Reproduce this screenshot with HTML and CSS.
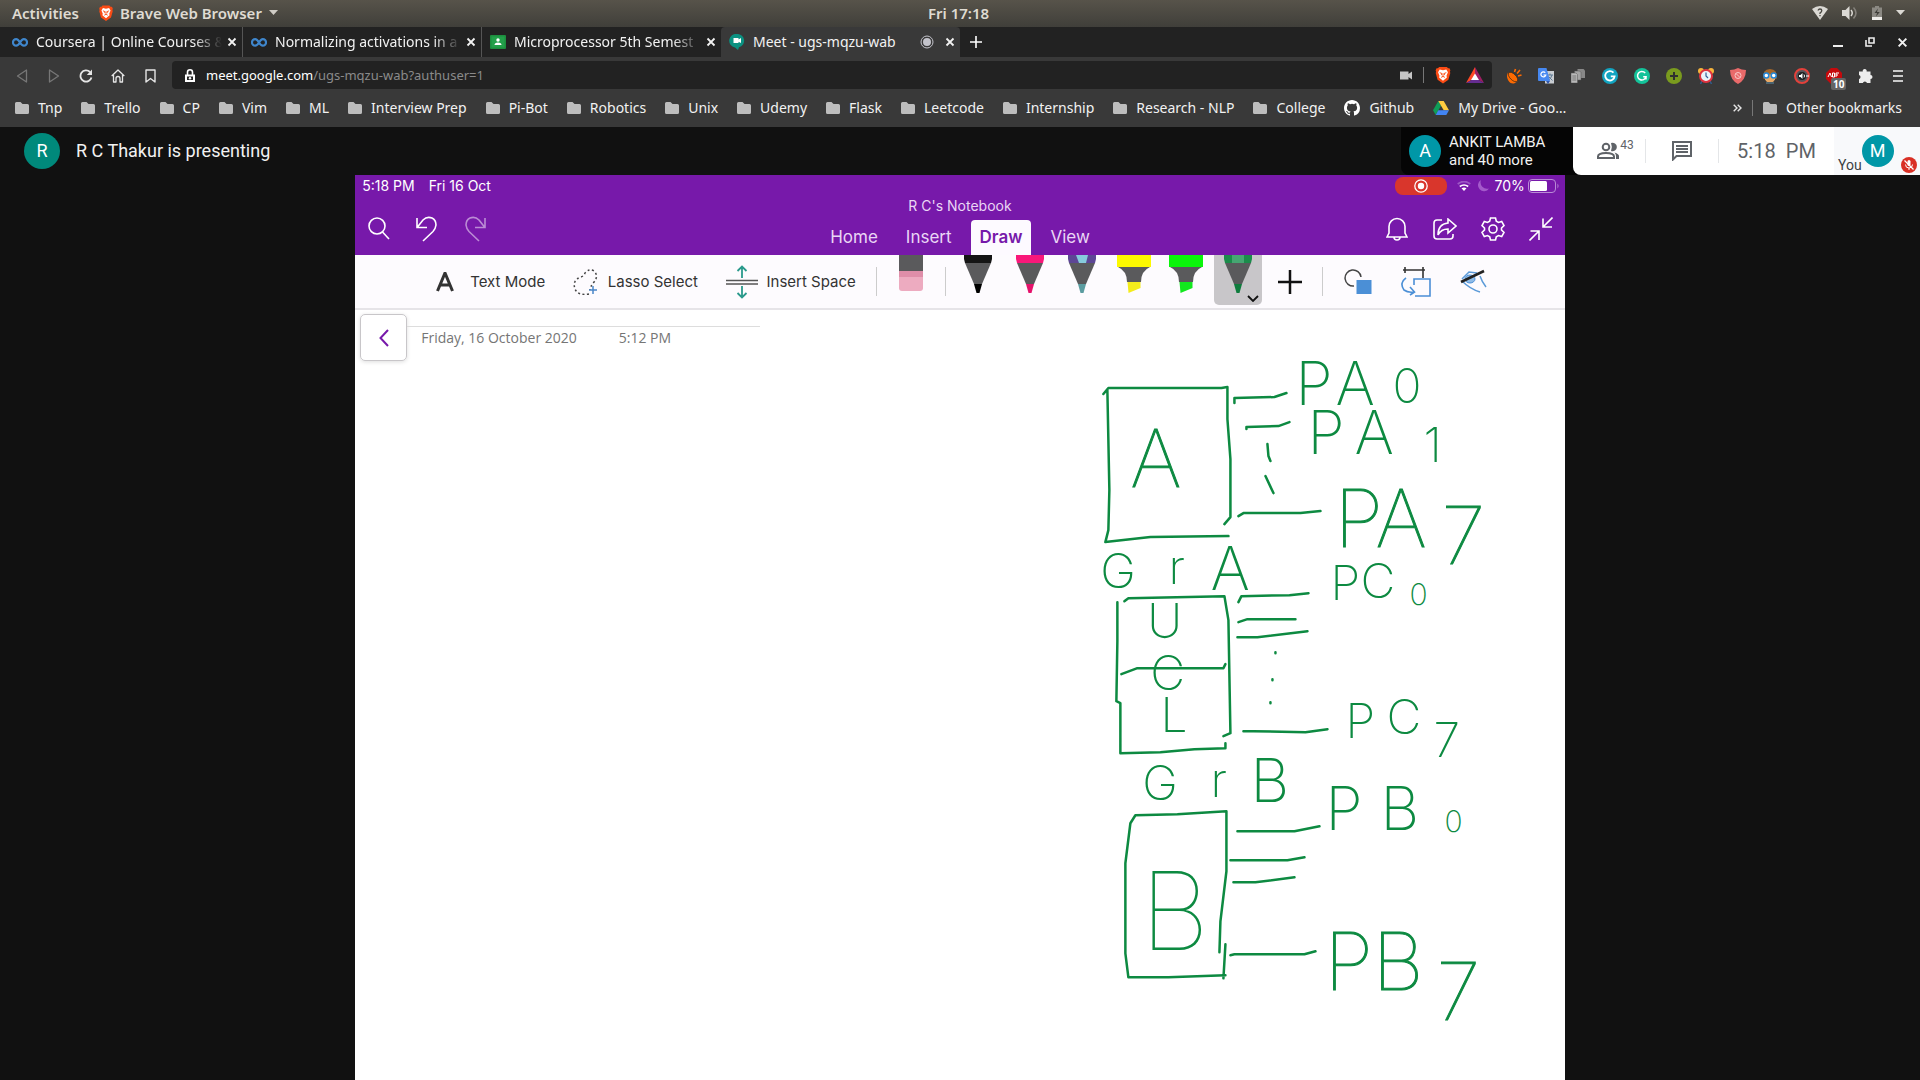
FILE: index.html
```html
<!DOCTYPE html>
<html lang="en">
<head>
<meta charset="utf-8">
<title>Meet - ugs-mqzu-wab</title>
<link rel="stylesheet" href="styles.css">
</head>
<body>
<svg class="defs" aria-hidden="true">
  <symbol id="folder" viewBox="0 0 14 12"><path d="M0 1.500Q0 0 1.500 0H5.500L7.500 2H12.500Q14 2 14 3.500V10.500Q14 12 12.500 12H1.500Q0 12 0 10.500Z" fill="#bdbdbd"/></symbol>
  <symbol id="coursera" viewBox="0 0 16 9"><path d="M8 4.500C6.500 2 5.500 1.200 4.200 1.200a3.200 3.200 0 0 0 0 6.500C6 7.700 6.800 6.500 8 4.500S10 1.200 11.800 1.200a3.200 3.200 0 0 1 0 6.500C10.500 7.700 9.500 7 8 4.500" fill="none" stroke="#3f86cc" stroke-width="2.200"/></symbol>
  <symbol id="x" viewBox="0 0 10 10"><path d="M1.500 1.500l7 7M8.500 1.500l-7 7" stroke="#f2f2f2" stroke-width="1.800" fill="none"/></symbol>
  <symbol id="brave" viewBox="0 0 16 19"><path d="M4 1h8l1.500 1.500 1.300-.2 1 2.200-.5 1.500.4 1.500-2 7L8 18.600 2.300 14.500l-2-7L.7 6 .2 4.500l1-2.200 1.300.2Z" fill="#fb4b14"/><path d="M4.500 3.800 8 4.500l3.500-.7 1.700 2.800-1.500 3.700 .4 1.800L8 15.500l-4.100-3.400.4-1.800L2.800 6.600Z" fill="#fff"/><path d="M4.500 7l2.500 1-.8 1.700M11.500 7L9 8l.8 1.700M8 8v3.500M6 12l2-1 2 1" stroke="#fb4b14" fill="none"/></symbol>
</svg>

<header class="desktop">
  <div class="desktop-left">
    <button>Activities</button>
    <button class="app-menu"><svg width="14" height="18"><use href="#brave"/></svg>Brave Web Browser<svg width="9" height="5" viewBox="0 0 9 5"><path d="M0 0h9L4.500 5Z" fill="#cfccc5"/></svg></button>
  </div>
  <time>Fri 17:18</time>
  <div class="desktop-right">
    <svg width="16" height="14" viewBox="0 0 16 14"><path d="M0 3Q8-3 16 3L8 14Z" fill="#dbd9d4"/><path d="M6.200 4.500Q6.200 3 8 3t1.800 1.500T8 7v1M8 9v1.300" stroke="#4a4842" stroke-width="1.300" fill="none"/></svg>
    <svg width="16" height="14" viewBox="0 0 16 14"><path d="M0 4h3.500L7.500 0v14L3.500 10H0Z" fill="#dbd9d4"/><path d="M9 4q2.500 3 0 6" stroke="#dbd9d4" stroke-width="1.500" fill="none"/><path d="M11.500 1.500q5 5.500 0 11" stroke="#85827c" stroke-width="1.500" fill="none"/></svg>
    <svg width="10" height="14" viewBox="0 0 10 14"><path d="M0 1.500h3V0h4v1.500h3V11H0Z" fill="#8b8983"/><path d="M0 11h10v3H0Z" fill="#efeeeb"/><path d="M6 2.500L2.500 7H5L4 10.500 7.800 6H5Z" fill="#3f3e39"/></svg>
    <svg width="9" height="5" viewBox="0 0 9 5"><path d="M0 0h9L4.500 5Z" fill="#dbd9d4"/></svg>
  </div>
</header>

<nav class="tabs" aria-label="Tabs">
  <div class="tab"><svg width="16" height="9"><use href="#coursera"/></svg><a href="#c" class="fade">Coursera | Online Courses &amp;</a><button aria-label="Close tab"><svg width="10" height="10"><use href="#x"/></svg></button></div>
  <div class="tab"><svg width="16" height="9"><use href="#coursera"/></svg><a href="#n" class="fade">Normalizing activations in a</a><button aria-label="Close tab"><svg width="10" height="10"><use href="#x"/></svg></button></div>
  <div class="tab"><svg width="16" height="14" viewBox="0 0 16 14"><rect width="16" height="14" rx="1" fill="#1d8e3e"/><rect x="1.500" y="1.500" width="13" height="11" fill="#23a04a"/><circle cx="8" cy="5" r="1.700" fill="#fff"/><path d="M4.500 10q0-2.500 3.500-2.500t3.500 2.500Z" fill="#fff"/></svg><a href="#m" class="fade">Microprocessor 5th Semest</a><button aria-label="Close tab"><svg width="10" height="10"><use href="#x"/></svg></button></div>
  <div class="tab active"><svg width="16" height="16" viewBox="0 0 14 16"><path d="M7 0a6.700 6.700 0 0 1 2 13.200L8 16l-3-2.500A6.700 6.700 0 0 1 7 0Z" fill="#0b9181"/><path d="M3.500 4h5v1.500L11 4v5L8.500 7.800V9h-5Z" fill="#fff"/></svg><a href="#meet">Meet - ugs-mqzu-wab</a><svg width="14" height="14" viewBox="0 0 14 14"><circle cx="7" cy="7" r="6" fill="none" stroke="#c3c3cb"/><circle cx="7" cy="7" r="4" fill="#c3c3cb"/></svg><button aria-label="Close tab"><svg width="10" height="10"><use href="#x"/></svg></button></div>
  <button class="slot" aria-label="New tab"><svg width="12" height="12" viewBox="0 0 12 12"><path d="M6 0v12M0 6h12" stroke="#fff" stroke-width="1.600"/></svg></button>
  <div class="window-buttons">
    <button class="slot" aria-label="Minimize"><svg width="10" height="10" viewBox="0 0 10 10"><path d="M0 9h10" stroke="#eee" stroke-width="2"/></svg></button>
    <button class="slot" aria-label="Restore"><svg width="10" height="10" viewBox="0 0 10 10"><path d="M4 1h5v5H4ZM1 3v6h6" stroke="#eee" stroke-width="1.600" fill="none"/></svg></button>
    <button class="slot" aria-label="Close"><svg width="11" height="11"><use href="#x"/></svg></button>
  </div>
</nav>

<div class="toolbar">
  <div class="slots">
    <button class="slot" aria-label="Back"><svg width="12" height="14" viewBox="0 0 12 14"><path d="M10.500 1v12L1.500 7Z" fill="none" stroke="#777" stroke-width="1.300" stroke-linejoin="round"/></svg></button>
    <button class="slot" aria-label="Forward"><svg width="12" height="14" viewBox="0 0 12 14"><path d="M1.500 1v12l9-6Z" fill="none" stroke="#777" stroke-width="1.300" stroke-linejoin="round"/></svg></button>
    <button class="slot" aria-label="Reload"><svg width="14" height="14" viewBox="0 0 14 14"><path d="M11 3a5.600 5.600 0 1 0 1.500 5.500" fill="none" stroke="#e6e6e6" stroke-width="1.800"/><path d="M13 .5V6H7.800Z" fill="#e6e6e6"/></svg></button>
    <button class="slot" aria-label="Home"><svg width="14" height="14" viewBox="0 0 14 14"><path d="M.7 7L7 1l6.300 6M2.500 6v7H5V9.500q0-2 2-2t2 2V13h2.500V6" fill="none" stroke="#e6e6e6" stroke-width="1.300" stroke-linejoin="round"/></svg></button>
    <button class="slot" aria-label="Bookmark"><svg width="11" height="14" viewBox="0 0 11 14"><path d="M1 1h9v12L5.500 9.500 1 13Z" fill="none" stroke="#e6e6e6" stroke-width="1.400" stroke-linejoin="round"/></svg></button>
  </div>
  <div class="address">
    <svg width="10" height="13" viewBox="0 0 10 13"><path d="M2.500 6V3.300a2.500 2.500 0 0 1 5 0V6" fill="none" stroke="#fff" stroke-width="1.600"/><path d="M0 5.500h10V13H0Z" fill="#fff"/><rect x="2" y="7.500" width="6" height="3.500" fill="#222"/><circle cx="5" cy="9.200" r="1.200" fill="#fff"/></svg>
    <a href="#url">meet.google.com<span>/ugs-mqzu-wab?authuser=1</span></a>
    <svg width="12" height="9" viewBox="0 0 12 9"><path d="M0 .5h8.500V3L12 .5v8L8.500 6v2.500H0Z" fill="#c6c6c6"/></svg>
    <i class="rule"></i>
    <button aria-label="Brave Shields"><svg width="16" height="18"><use href="#brave"/></svg></button>
    <button aria-label="Brave Rewards"><svg width="18" height="16" viewBox="0 0 18 16"><path d="M9 0L0 16l9-5Z" fill="#ff4724"/><path d="M9 0l9 16-9-5Z" fill="#9e1f63"/><path d="M0 16h18l-9-5Z" fill="#662d91"/><path d="M9 6.500l4 6.500H5Z" fill="#fff"/></svg></button>
  </div>
  <div class="slots">
    <button class="slot" aria-label="Feed"><svg width="16" height="16" viewBox="0 0 16 16"><path d="M2 4.500Q0 8 2 12t6 3.500l3.500-2Q4 11 2 4.500Z" fill="#fd6a02"/><ellipse cx="7" cy="9" rx="6" ry="3" transform="rotate(45 7 9)" fill="#fd6a02" stroke="#3a2a1a" stroke-width=".7"/><path d="M8.500 4l1-3M11 5.500l3-3.500M12 8l3.500-1" stroke="#fd6a02" stroke-width="1.600"/></svg></button>
    <button class="slot" aria-label="Translate"><svg width="16" height="16" viewBox="0 0 16 16"><rect x="7" y="3" width="9" height="12.500" fill="#c9cdd2"/><path d="M8.500 7H15M12 5.500V7M14 7q-1 4-4 5.500M10.500 8.500l4 4" stroke="#5d7892" fill="none"/><path d="M0 1q0-1 1-1h7.500l3.500 13H1q-1 0-1-1Z" fill="#4688f1"/><path d="M8 13h4l-2 3Z" fill="#3057ac"/><path d="M7.300 4.700A2.500 2.500 0 1 0 7.800 7H5.500" stroke="#fff" stroke-width="1.200" fill="none"/></svg></button>
    <button class="slot" aria-label="Copy"><svg width="14" height="14" viewBox="0 0 14 14"><path d="M6.500 0h6L14 1.500V9H6.500Z" fill="#888"/><path d="M3.500 2h5L10 3.500V11H3.500Z" fill="#a5a5a5" stroke="#555" stroke-width=".5"/><path d="M0 4h5l1.500 1.500V14H0Z" fill="#b8b8b8" stroke="#555" stroke-width=".5"/><path d="M1.300 7h4M1.300 9h4M1.300 11h4" stroke="#777"/></svg></button>
    <button class="slot" aria-label="Grammar"><svg width="16" height="16" viewBox="0 0 16 16"><circle cx="8" cy="8" r="8" fill="#12a4c1"/><path d="M11.500 4.700A4.700 4.700 0 1 0 12.600 8.300H8.800" stroke="#fff" stroke-width="1.800" fill="none"/></svg></button>
    <button class="slot" aria-label="Grammarly"><svg width="16" height="16" viewBox="0 0 16 16"><circle cx="8" cy="8" r="8" fill="#14c39a"/><path d="M11.200 5A4.300 4.300 0 1 0 12 8.800H9.200M12 8.800V11.500" stroke="#fff" stroke-width="1.500" fill="none"/></svg></button>
    <button class="slot" aria-label="Add"><svg width="16" height="16" viewBox="0 0 16 16"><circle cx="8" cy="8" r="8" fill="#7a9b1e"/><path d="M8 4v8M4 8h8" stroke="#303030" stroke-width="2"/></svg></button>
    <button class="slot" aria-label="Alarm"><svg width="16" height="16" viewBox="0 0 16 16"><circle cx="3" cy="3" r="3" fill="#f6b43c"/><circle cx="13" cy="3" r="3" fill="#f6b43c"/><path d="M4 13l-1.500 3M12 13l1.500 3" stroke="#2f5d8c" stroke-width="1.500"/><circle cx="8" cy="8" r="6" fill="#eaf4fb" stroke="#e0333f" stroke-width="2"/><path d="M8 4.500V8l2 2" stroke="#34609b" stroke-width="1.200" fill="none"/></svg></button>
    <button class="slot" aria-label="Shield"><svg width="16" height="16" viewBox="0 0 16 16"><path d="M8 0q3.500 2 8 2-.2 10-8 14Q.2 12 0 2 4.500 2 8 0Z" fill="#e96a6a"/><circle cx="8" cy="7.500" r="3" fill="none" stroke="#f9c9c9"/><path d="M6 5.500l4 4" stroke="#f9c9c9"/></svg></button>
    <button class="slot" aria-label="Profile"><svg width="16" height="16" viewBox="0 0 16 16"><path d="M1.500 11Q0 1 8 1t6.500 10Z" fill="#a4672b"/><path d="M3 6.500h10v5Q8 19 3 11.500Z" fill="#e9aa67"/><circle cx="4.300" cy="7.500" r="2.500" fill="#fff" stroke="#2387d8" stroke-width="1.500"/><circle cx="11.700" cy="7.500" r="2.500" fill="#fff" stroke="#2387d8" stroke-width="1.500"/><path d="M4 14h8v2H4Z" fill="#4b6471"/></svg></button>
    <button class="slot" aria-label="Volume"><svg width="16" height="16" viewBox="0 0 16 16"><circle cx="8" cy="8" r="7" fill="#56565b" stroke="#e3413b" stroke-width="2"/><circle cx="8" cy="8" r="4" fill="#1d1d1f"/><path d="M5 7h1.500L8.500 5v6L6.500 9H5Z" fill="#fff"/><path d="M10 6.500q1 1.500 0 3M12 8h3" stroke="#fff" fill="none"/></svg></button>
    <button class="slot badge-host" aria-label="Ad blocker"><svg width="16" height="16" viewBox="0 0 16 16"><path d="M5 0h6l5 5v6l-5 5H5l-5-5V5Z" fill="#c5090c"/><path d="M2 9l2-4 1.500 4M6.500 9V5h2v4ZM10 9V5h3M10 7h2" stroke="#fff" fill="none"/></svg><b class="badge">10</b></button>
    <button class="slot" aria-label="Extensions"><svg width="15" height="15" viewBox="0 0 15 15"><path d="M0 3.500h3.800a2 2 0 1 1 3.800 0H11.500V7a2 2 0 1 1 0 4v4H8a2.200 2.200 0 0 0-4.200 0H0v-3.800A2.200 2.200 0 0 0 0 7Z" fill="#eee"/></svg></button>
    <button class="slot" aria-label="Menu"><svg width="10" height="12" viewBox="0 0 10 12"><path d="M0 1h10M0 6h10M0 11h10" stroke="#c9c9c9" stroke-width="2"/></svg></button>
  </div>
</div>

<nav class="bookmarks" aria-label="Bookmarks">
  <a href="#b"><svg width="14" height="12"><use href="#folder"/></svg>Tnp</a>
  <a href="#b"><svg width="14" height="12"><use href="#folder"/></svg>Trello</a>
  <a href="#b"><svg width="14" height="12"><use href="#folder"/></svg>CP</a>
  <a href="#b"><svg width="14" height="12"><use href="#folder"/></svg>Vim</a>
  <a href="#b"><svg width="14" height="12"><use href="#folder"/></svg>ML</a>
  <a href="#b"><svg width="14" height="12"><use href="#folder"/></svg>Interview Prep</a>
  <a href="#b"><svg width="14" height="12"><use href="#folder"/></svg>Pi-Bot</a>
  <a href="#b"><svg width="14" height="12"><use href="#folder"/></svg>Robotics</a>
  <a href="#b"><svg width="14" height="12"><use href="#folder"/></svg>Unix</a>
  <a href="#b"><svg width="14" height="12"><use href="#folder"/></svg>Udemy</a>
  <a href="#b"><svg width="14" height="12"><use href="#folder"/></svg>Flask</a>
  <a href="#b"><svg width="14" height="12"><use href="#folder"/></svg>Leetcode</a>
  <a href="#b"><svg width="14" height="12"><use href="#folder"/></svg>Internship</a>
  <a href="#b"><svg width="14" height="12"><use href="#folder"/></svg>Research - NLP</a>
  <a href="#b"><svg width="14" height="12"><use href="#folder"/></svg>College</a>
  <a href="#b"><svg width="16" height="16" viewBox="0 0 16 16"><path fill="#fff" d="M8 0C3.580 0 0 3.580 0 8c0 3.540 2.290 6.530 5.470 7.590.4.070.55-.17.55-.38 0-.19-.01-.82-.01-1.490-2.010.37-2.530-.49-2.690-.94-.09-.23-.48-.94-.82-1.130-.28-.15-.68-.52-.01-.53.63-.01 1.080.58 1.230.82.72 1.210 1.870.87 2.330.66.07-.52.28-.87.51-1.070-1.780-.2-3.640-.89-3.640-3.950 0-.87.31-1.590.82-2.150-.08-.2-.36-1.020.08-2.120 0 0 .67-.21 2.200.82a7.600 7.600 0 0 1 4 0c1.530-1.040 2.200-.82 2.200-.82.44 1.100.16 1.920.08 2.120.51.56.82 1.270.82 2.150 0 3.070-1.870 3.750-3.650 3.950.29.25.54.73.54 1.480 0 1.070-.01 1.930-.01 2.200 0 .21.15.46.55.38A8 8 0 0 0 16 8c0-4.420-3.580-8-8-8Z"/></svg>Github</a>
  <a href="#b"><svg width="16" height="14" viewBox="0 0 16 14"><path d="M5.300 0L0 9.300 2.700 14 8 4.700Z" fill="#0f9d58"/><path d="M5.300 0h5.400L16 9.300h-5.300Z" fill="#ffcd40"/><path d="M5.300 9.300H16L13.300 14H2.700Z" fill="#4285f4"/></svg>My Drive - Goo…</a>
  <div class="bookmarks-end">
    <button aria-label="More bookmarks"><svg width="9" height="8" viewBox="0 0 9 8"><path d="M.7.7L4 4 .7 7.300M4.700.7L8 4 4.700 7.300" fill="none" stroke="#e6e6e6" stroke-width="1.400"/></svg></button>
    <i class="rule"></i>
    <a href="#b"><svg width="14" height="12"><use href="#folder"/></svg>Other bookmarks</a>
  </div>
</nav>

<main class="meet">
  <div class="meet-bar">
    <span class="avatar presenter">R</span>
    <h1>R C Thakur is presenting</h1>
    <div class="speaker"><span class="avatar">A</span><p>ANKIT LAMBA<br>and 40 more</p></div>
    <div class="panel">
      <button class="people" aria-label="People"><svg width="24" height="24" viewBox="0 0 24 24"><g fill="none" stroke="#5f6368" stroke-width="2"><circle cx="10" cy="8" r="3.300"/><path d="M2 19v-1.500Q2 14 10 14t8 3.500V19Z"/></g><path d="M15 4a4.300 4.300 0 1 1 0 8q1.700-4 0-8ZM18.500 13.500Q23 15 23 17v3h-3v-3q0-2-1.500-3.500Z" fill="#5f6368"/></svg><span>43</span></button>
      <button class="chat" aria-label="Chat"><svg width="20" height="20" viewBox="0 0 20 20"><path d="M1 1h18v14H4.500L1 18.500Z" fill="none" stroke="#5f6368" stroke-width="2"/><path d="M4 5h12M4 8h12M4 11h12" stroke="#5f6368" stroke-width="2"/></svg></button>
      <time>5:18&ensp;PM</time>
      <div class="you"><span>You</span><span class="avatar">M</span><svg class="muted" width="16" height="16" viewBox="0 0 16 16"><circle cx="8" cy="8" r="8" fill="#d93025"/><rect x="6.500" y="3" width="3" height="6" rx="1.500" fill="#fff"/><path d="M4.500 7.500q0 3.500 3.500 3.500t3.500-3.500M8 11v2" stroke="#fff" fill="none"/><path d="M3.500 3.500l9 9" stroke="#fff" stroke-width="1.200"/></svg></div>
    </div>
  </div>

  <section class="share">
    <header class="note-head">
      <div class="head-side">
        <div class="status"><span>5:18 PM</span><span>Fri 16 Oct</span></div>
        <div class="head-icons">
          <button aria-label="Search"><svg width="22" height="24" viewBox="0 0 22 24"><circle cx="9" cy="9" r="8" /><path d="M14.500 15l6.500 7"/></svg></button>
          <button aria-label="Undo"><svg width="22" height="26" viewBox="0 0 22 26"><path d="M1 2v9.500h10M1.500 11L7 4q4-4 9-2 4 2 4 7-.5 4-3 6.500L7 25"/></svg></button>
          <button class="off" aria-label="Redo"><svg width="22" height="26" viewBox="0 0 22 26"><path d="M21 2v9.500H11M20.500 11L15 4q-4-4-9-2-4 2-4 7 .5 4 3 6.500L15 25"/></svg></button>
        </div>
      </div>
      <div class="head-main">
        <h2>R C's Notebook</h2>
        <nav class="ribbon-tabs"><a href="#h">Home</a><a href="#i">Insert</a><a href="#d" class="on">Draw</a><a href="#v">View</a></nav>
      </div>
      <div class="head-side right">
        <div class="status">
          <span class="record"><svg width="14" height="14" viewBox="0 0 14 14"><circle cx="7" cy="7" r="6.200" fill="none" stroke="#fff" stroke-width="1.300"/><circle cx="7" cy="7" r="3.200" fill="#fff"/></svg></span>
          <svg width="14" height="10" viewBox="0 0 14 10"><path d="M.7 3Q7-2 13.300 3" stroke="#9c56c4" stroke-width="1.700" fill="none"/><path d="M2.800 5.500q4.200-3 8.400 0" stroke="#fff" stroke-width="1.700" fill="none"/><path d="M4.500 7.200q2.500-1.600 5 0L7 10Z" fill="#fff"/></svg>
          <svg width="12" height="12" viewBox="0 0 12 12"><path d="M4 0A6 6 0 1 0 12 8.500 6.500 6.500 0 0 1 4 0Z" fill="#a45acb"/></svg>
          <div class="battery"><span>70%</span>
          <svg width="32" height="14" viewBox="0 0 32 14"><rect x=".5" y=".5" width="27" height="13" rx="3.500" fill="none" stroke="#b98bd6"/><rect x="2" y="2" width="17" height="10" rx="1.500" fill="#fff"/><path d="M29.500 4.500q2 2.500 0 5Z" fill="#b98bd6"/></svg></div>
        </div>
        <div class="head-icons">
          <button aria-label="Notifications"><svg width="22" height="24" viewBox="0 0 22 24"><path d="M1 20L3 16V9.500a8 8 0 0 1 16 0V16l2 4ZM8 20q0 3 3 3t3-3"/></svg></button>
          <button aria-label="Share"><svg width="24" height="22" viewBox="0 0 24 22"><path d="M9 2H4Q1 2 1 5v13q0 3 3 3h13q3 0 3-3v-2M15 1l8 7-8 7V11Q8 11 5 17 5 6 15 5Z"/></svg></button>
          <button aria-label="Settings"><svg width="24" height="24" viewBox="0 0 24 24"><circle cx="12" cy="12" r="4"/><path d="M9.500 1h5l.8 3.200 2.200 1.200 3.200-1 2.300 4.200L20.500 11v2l2.500 2.400-2.300 4.200-3.200-1-2.200 1.200-.8 3.200h-5l-.8-3.200-2.200-1.200-3.200 1L1 15.400 3.500 13v-2L1 8.600l2.300-4.200 3.200 1 2.200-1.200Z"/></svg></button>
          <button aria-label="Exit full screen"><svg width="24" height="24" viewBox="0 0 24 24"><path d="M23.500.5L14 10M14 1.500V10h9M.5 23.500L10 14M1.500 14H10v9"/></svg></button>
        </div>
      </div>
    </header>

    <div class="ribbon">
      <div class="ribbon-tools">
        <button><svg width="20" height="20" viewBox="0 0 20 20"><path d="M2.500 19L10 1l7.500 18M5 13h10" fill="none" stroke="#333" stroke-width="3"/></svg>Text Mode</button>
        <button><svg width="26" height="26" viewBox="0 0 26 26"><path d="M16 25Q5 27 2 20-1 11 8 8q3-1 4-4 4-5 9-2 5 5 0 11-4 5-4 8" fill="none" stroke="#444" stroke-width="1.500" stroke-dasharray="2 2.500"/><path d="M20 17v8M16 21h8" stroke="#4a86c8" stroke-width="1.500"/></svg>Lasso Select</button>
        <button><svg width="32" height="34" viewBox="0 0 32 34"><path d="M0 15.500h32M0 19h32" stroke="#555" stroke-width="1.500"/><path d="M16 13V2M11.500 6L16 1.500 20.500 6M16 21v11M11.500 28l4.500 4.500 4.500-4.500" stroke="#2a9a8c" stroke-width="1.800" fill="none"/></svg>Insert Space</button>
      </div>
      <i class="rule"></i>
      <button class="pen eraser" aria-label="Eraser"><svg width="24" height="36" viewBox="0 0 24 36"><path d="M0 0h24v16H0Z" fill="#5a5a5c"/><path d="M0 16h24v17q0 3-3 3H3q-3 0-3-3Z" fill="#edabc0"/><path d="M0 16h24v6H0Z" fill="#df8ea9"/></svg></button>
      <i class="rule"></i>
      <button class="pen" aria-label="Black pen"><svg width="28" height="39" viewBox="0 0 28 39"><path d="M0 0h28v4l-1 4H1L0 4Z" fill="#151515"/><path d="M1 8h26l-9 21h-8Z" fill="#5a5a5c"/><path d="M10 29h8L15.500 38h-3Z" fill="#000"/></svg></button>
      <button class="pen" aria-label="Pink pen"><svg width="28" height="39" viewBox="0 0 28 39"><path d="M0 0h28v4l-1 4H1L0 4Z" fill="#f9187a"/><path d="M1 8h26l-9 21h-8Z" fill="#5a5a5c"/><path d="M10 29h8L15.500 38h-3Z" fill="#e5126b"/></svg></button>
      <button class="pen" aria-label="Galaxy pen"><svg width="28" height="39" viewBox="0 0 28 39"><path d="M0 0h28v4l-1 4H1L0 4Z" fill="#5d4695"/><path d="M8 0h12l-2 8h-7Z" fill="#86cbdc"/><path d="M1 8h26l-9 21h-8Z" fill="#5a5a5c"/><path d="M10 29h8L15.500 38h-3Z" fill="#5b9ca0"/></svg></button>
      <button class="pen" aria-label="Yellow highlighter"><svg width="34" height="39" viewBox="0 0 34 39"><path d="M0 0h34v12H0Z" fill="#fdf900"/><path d="M1 12h32q-9 4-9 15H10Q10 16 1 12Z" fill="#5a5a5c"/><path d="M10.500 27h13v6l-12 5Z" fill="#f4ec1c"/></svg></button>
      <button class="pen" aria-label="Green highlighter"><svg width="34" height="39" viewBox="0 0 34 39"><path d="M0 0h34v12H0Z" fill="#0bf50b"/><path d="M1 12h32q-9 4-9 15H10Q10 16 1 12Z" fill="#5a5a5c"/><path d="M10.500 27h13v6l-12 5Z" fill="#12e81e"/></svg></button>
      <button class="pen on" aria-label="Green pen"><svg width="28" height="39" viewBox="0 0 28 39"><path d="M0 0h28v4l-1 4H1L0 4Z" fill="#1b8c4b"/><path d="M8 0h12v8H8Z" fill="#46a672"/><path d="M1 8h26l-9 21h-8Z" fill="#5a5a5c"/><path d="M10 29h8L15.500 38h-3Z" fill="#0f7c3d"/></svg><svg class="drop" width="12" height="7" viewBox="0 0 12 7"><path d="M1 1l5 5 5-5" fill="none" stroke="#111" stroke-width="1.800"/></svg></button>
      <button class="tool" aria-label="Add pen"><svg width="24" height="24" viewBox="0 0 24 24"><path d="M12 0v24M0 12h24" stroke="#111" stroke-width="2.500"/></svg></button>
      <i class="rule"></i>
      <button class="tool wide" aria-label="Shapes"><svg width="28" height="26" viewBox="0 0 28 26"><path d="M10 17A8 8 0 1 1 17 8" fill="none" stroke="#444" stroke-width="1.500"/><rect x="12.500" y="11" width="15" height="14" fill="#4b8fd6"/></svg></button>
      <button class="tool wide" aria-label="Ink to shape"><svg width="30" height="30" viewBox="0 0 30 30"><path d="M2 3h22M4 0v6M22 0v11" stroke="#333" stroke-width="1.600" fill="none"/><path d="M13 18v-6h16v17H14M5 11Q-2 16 3 23q4 3 10 2M9 20l4.500 5L9 28" stroke="#4b8fd6" stroke-width="1.600" fill="none"/></svg></button>
      <button class="tool wide" aria-label="Ink review"><svg width="28" height="26" viewBox="0 0 28 26"><path d="M2 10L9 3l8 1M20 7q2 6 6 11M2 12q8 8 18 11" stroke="#5b9ad8" stroke-width="1.500" fill="none"/><ellipse cx="10" cy="10" rx="5" ry="4" fill="#8fbce8" stroke="#4b8fd6"/><path d="M1 13L24 2" stroke="#222" stroke-width="2.500"/></svg></button>
    </div>

    <div class="paper">
      <div class="page-head">
        <button aria-label="Back to pages"><svg width="10" height="18" viewBox="0 0 10 18"><path d="M9 1L1.500 9 9 17" fill="none" stroke="#7719aa" stroke-width="2"/></svg></button>
        <p><span>Friday, 16 October 2020</span><span>5:12 PM</span></p>
      </div>
      <svg class="ink" viewBox="355 310 1209 770" preserveAspectRatio="xMinYMin meet">
        <!-- port blocks -->
        <path d="M1103 394l5-6h113l6-1v32l3 40v58l-6 7M1107 390l2 100-1 40-3 12 45-5 78-1"/>
        <path d="M1124 601l4-3 96-2 4 24 2 113-7 3M1117 602v39l-1 60 4 2v50l40-1 34-3 31-1v-5M1121 674l16-6h86l2-4"/>
        <path d="M1130 823l5-8 42-1 49-3v60l-6 50-1 31M1130 823l-5 40v90l3 24h40l57-2M1225 944l-2 34"/>
        <!-- port lines -->
        <path d="M1234 403v-5l40-1 12-4M1246 429v-2l32-1 11-4M1267 444l1 12 2 5M1265 476l8 17M1238 516l5-3h57l20-2"/>
        <path d="M1238 602l3-6 48-1 19-2M1238 622l9-3h48M1237 637h20l50-6M1243 731h10l52 1 22-3"/>
        <path d="M1237 831h57l25-5M1230 860h57l17-3M1233 882h22l39-5M1230 955l4-1h70l11-3"/>
        <path d="M1275 652v1M1272 679v1M1270 702v1"/>
        <g class="s60"><text x="1295 1335" y="405">PA</text><text x="1307 1354" y="454">PA</text><text x="1210" y="590">A</text><text x="1250" y="802">B</text><text x="1325 1380" y="830">PB</text></g>
        <g class="s80"><text x="1334 1375 1441" y="547 547 564">PA7</text><text x="1130" y="487">A</text><text x="1324 1372 1436" y="990 990 1020">PB7</text></g>
        <g class="s48"><text x="1392" y="403">0</text><text x="1423" y="462">1</text><text x="1100 1168" y="588 584">Gr</text><text x="1330 1360" y="600 598">PC</text><text x="1147" y="638">U</text><text x="1150" y="690">C</text><text x="1160" y="732">L</text><text x="1345 1386 1433" y="738 734 757">PC7</text><text x="1142 1210" y="800 797">Gr</text></g>
        <g class="s30"><text x="1409" y="605">0</text><text x="1444" y="832">0</text></g>
        <text class="s108" x="1140" y="950">B</text>
      </svg>
    </div>
  </section>
</main>
</body>
</html>
```

FILE: styles.css
```css
* { box-sizing: border-box; }

body {
  margin: 0;
  min-height: 100vh;
  display: flex;
  flex-direction: column;
  background: #111;
  color: #f2f2f2;
  font: 14px/20px "Noto Sans", sans-serif;
}

button {
  padding: 0;
  border: 0;
  background: none;
  color: inherit;
  font: inherit;
}

a { color: inherit; text-decoration: none; }
svg { display: block; flex: none; }
h1, h2, p { margin: 0; font-weight: 400; }

.defs { position: absolute; width: 0; height: 0; }

/* Desktop bar */
.desktop {
  height: 27px;
  padding: 0 15px 2px 12px;
  display: grid;
  grid-template-columns: 1fr auto 1fr;
  align-items: center;
  background: linear-gradient(#57534a, #403f3a);
  color: #dfdbd2;
  font-size: 15px;
  font-weight: 600;
}
.desktop-left, .desktop-right, .app-menu { display: flex; align-items: center; }
.desktop-left { gap: 20px; }
.app-menu { gap: 7px; }
.desktop-right { justify-content: flex-end; gap: 14px; }

/* Tab strip */
.tabs { height: 30px; padding-left: 4px; display: flex; background: #222; }
.tab {
  flex: 0 1 239px;
  min-width: 0;
  padding: 0 2px 0 8px;
  display: flex;
  align-items: center;
  gap: 8px;
  border-right: 1px solid #555;
}
.tab a { flex: 1; min-width: 0; overflow: hidden; white-space: nowrap; }
.tab button { margin-left: -6px; padding: 3px; }
.tab.active button { margin-left: 0; }
.tab:nth-child(3) { border-right: 0; }
.tab.active { border: 0; border-radius: 4px 4px 0 0; background: #393939; }
.fade { mask-image: linear-gradient(90deg, #000 85%, transparent); }
.window-buttons { margin-left: auto; padding-right: 2px; display: flex; }

.slot { width: 32px; display: flex; align-items: center; justify-content: center; }

/* Toolbar */
.toolbar { height: 37px; padding: 4px 6px; display: flex; background: #393939; }
.slots { display: flex; }
.address {
  flex: 1;
  height: 28px;
  margin: 0 6px;
  padding: 0 4px 0 13px;
  display: flex;
  align-items: center;
  gap: 11px;
  border-radius: 4px;
  background: #222;
}
.address a { flex: 1; color: #fff; font-size: 13px; }
.address span { color: #8a8a8a; }
.address button { margin-right: 4px; }
.rule { width: 1px; height: 16px; background: #777; }
.badge-host { position: relative; }
.badge {
  position: absolute;
  left: 13px;
  bottom: 0;
  padding: 0 2px;
  border-radius: 2px;
  background: #646464;
  color: #fff;
  font: 700 10px/12px "Noto Sans", sans-serif;
}

/* Bookmarks */
.bookmarks {
  height: 33px;
  padding: 0 18px 5px 15px;
  display: flex;
  align-items: center;
  gap: 19px;
  background: #393939;
  white-space: nowrap;
}
.bookmarks a { display: flex; align-items: center; gap: 9px; }
.bookmarks-end { margin-left: auto; display: flex; align-items: center; gap: 10px; }

/* Meeting */
.meet { flex: 1; display: flex; flex-direction: column; font-family: Roboto, sans-serif; }
.meet-bar { height: 48px; padding-left: 24px; display: flex; align-items: center; gap: 16px; }
.meet-bar h1 { font-size: 18px; line-height: 24px; }
.avatar {
  width: 32px;
  height: 32px;
  flex: none;
  display: grid;
  place-items: center;
  border-radius: 50%;
  background: #0097a7;
  color: #fff;
  font-size: 18px;
}
.avatar.presenter { width: 36px; height: 36px; background: #00897b; }
.speaker {
  width: 180px;
  height: 48px;
  margin: 0 -24px 0 auto;
  padding-left: 8px;
  display: flex;
  align-items: center;
  gap: 8px;
  border-radius: 0 0 0 8px;
  background: #050505;
  font-size: 15px;
  line-height: 18px;
}
.panel {
  height: 48px;
  display: flex;
  align-items: center;
  border-radius: 0 0 0 8px;
  overflow: hidden;
  background: #fff;
  color: #5f6368;
}
.people, .chat {
  width: 73px;
  height: 24px;
  display: flex;
  align-items: center;
  justify-content: center;
  border-right: 1px solid #e4e6e8;
}
.people { padding-left: 12px; }
.people span { align-self: flex-start; font-size: 12px; line-height: 12px; }
.panel time { width: 115px; text-align: center; font-size: 20px; }
.you {
  position: relative;
  width: 86px;
  height: 48px;
  padding-left: 4px;
  display: flex;
  align-items: center;
  background: #f8f9fb;
  color: #3c4043;
}
.you > span:first-child { align-self: flex-end; }
.muted { position: absolute; right: 3px; bottom: 2px; }

/* Shared notebook */
.share {
  flex: 1;
  width: 63%;
  margin: 0 auto;
  display: flex;
  flex-direction: column;
  background: #fff;
  color: #333;
  font: 15px/20px Inter, sans-serif;
}
.note-head {
  height: 80px;
  display: grid;
  grid-template-columns: 1fr auto 1fr;
  background: #7719aa;
  color: #fff;
}
.head-side { display: flex; flex-direction: column; }
.status {
  height: 22px;
  padding: 0 7px;
  display: flex;
  align-items: center;
  gap: 14px;
  font-size: 14px;
}
.head-icons { height: 58px; padding-top: 6px; display: flex; align-items: center; }
.head-icons button { width: 48px; display: flex; justify-content: center; }
.head-icons svg { fill: none; stroke: #fff; stroke-width: 1.6; }
.off { opacity: .5; }
.right { align-items: flex-end; }
.right .status { padding-right: 5px; gap: 6px; }
.battery { display: flex; align-items: center; gap: 3px; }
.record {
  width: 52px;
  height: 18px;
  margin-right: 4px;
  display: grid;
  place-items: center;
  border-radius: 8px;
  background: #d9362c;
}
.head-main { display: flex; flex-direction: column; justify-content: flex-end; text-align: center; color: #ead6f5; }
.head-main h2 { margin-bottom: 4px; font-size: 14px; line-height: 20px; }
.ribbon-tabs { display: flex; gap: 10px; font-size: 17px; line-height: 35px; }
.ribbon-tabs a { padding: 0 9px; }
.ribbon-tabs .on { border-radius: 4px 4px 0 0; background: #fdfaff; color: #7719aa; font-weight: 600; }

.ribbon {
  height: 55px;
  display: flex;
  align-items: center;
  border-bottom: 2px solid #e6e4e8;
  background: #fdfbfe;
}
.ribbon-tools { flex: 1; padding: 0 14px 0 80px; display: flex; justify-content: space-between; }
.ribbon-tools button { display: flex; align-items: center; gap: 9px; white-space: nowrap; }
.ribbon-tools button:first-child { gap: 15px; }
.ribbon .rule { height: 29px; margin: 0 6px; background: #ccc; }
.pen { position: relative; width: 52px; align-self: stretch; display: flex; justify-content: center; }
.eraser { width: 56px; }
.pen.on { width: 48px; height: 50px; margin: 0 2px; border-radius: 0 0 5px 5px; background: #c8c6c9; }
.drop { position: absolute; right: 3px; bottom: 3px; }
.tool { width: 52px; display: flex; justify-content: center; }
.wide { width: 58px; }
.wide:last-child { margin-right: 62px; }

.paper { position: relative; flex: 1; overflow: hidden; font-family: "Open Sans", sans-serif; }
.page-head { padding: 4px 0 0 5px; display: flex; font-size: 14px; color: #757575; }
.page-head button {
  width: 47px;
  height: 47px;
  display: grid;
  place-items: center;
  border: 1px solid #c8c6c9;
  border-radius: 5px;
  box-shadow: 0 1px 4px #0002;
}
.page-head p {
  width: 353px;
  margin-top: 12px;
  padding: 1px 0 0 14px;
  display: flex;
  gap: 42px;
  border-top: 1px solid #ddd;
}
.ink { position: absolute; inset: 0; width: 100%; }
.ink path { fill: none; stroke: #0d8a41; stroke-width: 2.5; stroke-linecap: round; stroke-linejoin: round; }
.ink text { fill: #0d8a41; font-family: Inter, sans-serif; font-weight: 200; }
.s30 { font-size: 30px; }
.s48 { font-size: 48px; }
.s60 { font-size: 60px; }
.s80 { font-size: 80px; }
.ink .s108 { font-size: 108px; font-weight: 100; }
.ink .s80 text { font-weight: 100; stroke: #0d8a41; stroke-width: 1; }
```
